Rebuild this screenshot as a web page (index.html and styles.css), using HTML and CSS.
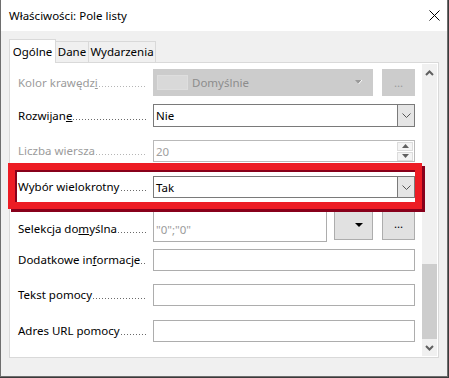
FILE: index.html
```html
<!DOCTYPE html>
<html lang="pl">
<head>
  <meta charset="UTF-8" />
  <title>Właściwości: Pole listy</title>
  <link rel="stylesheet" href="styles.css">
</head>
<body>
  <div class="window">
    <div class="titlebar">
      <span class="title">Właściwości: Pole listy</span>
      <svg class="close" width="11" height="11" viewBox="0 0 11 11">
        <path d="M0.5 0.5 L10.5 10.5 M10.5 0.5 L0.5 10.5" stroke="#000" stroke-width="1" fill="none"/>
      </svg>
    </div>

    <div class="client">
      <div class="tabs">
        <div class="tab tab-active">Ogólne</div>
        <div class="tab tab-dane">Dane</div>
        <div class="tab tab-events">Wydarzenia</div>
      </div>

      <div class="panel">
        <div class="form">
          <!-- Kolor krawedzi (disabled) -->
          <div class="row row-1">
            <div class="label disabled"><span>Kolor krawędz<u>i</u></span><span class="leader"></span></div>
            <div class="listbox listbox-disabled">
              <span class="swatch"></span>
              <span class="value">Domyślnie</span>
              <svg class="tri-disabled" width="8" height="5" viewBox="0 0 8 5">
                <path d="M0 0 H7 L3.5 4 Z" fill="#9a9a9a"/>
                <path d="M7 0 L3.5 4" stroke="#fff" stroke-width="1"/>
              </svg>
            </div>
            <div class="btn btn-disabled">...</div>
          </div>

          <div class="row row-2">
            <div class="label"><span>Rozwijan<u>e</u></span><span class="leader"></span></div>
            <div class="listbox">
              <span class="value">Nie</span>
              <span class="drop">
                <svg width="9" height="5" viewBox="0 0 9 5"><path d="M0.5 0.5 L4.5 4.5 L8.5 0.5" stroke="#555" fill="none"/></svg>
              </span>
            </div>
          </div>

          <div class="row row-3">
            <div class="label disabled"><span>Liczba wiersza</span><span class="leader"></span></div>
            <div class="spin">
              <span class="value">20</span>
              <span class="spin-btns">
                <span class="spin-btn"><svg width="7" height="4" viewBox="0 0 7 4"><path d="M0 4 H7 L3.5 0 Z" fill="#606060"/></svg></span>
                <span class="spin-btn"><svg width="7" height="4" viewBox="0 0 7 4"><path d="M0 0 H7 L3.5 4 Z" fill="#606060"/></svg></span>
              </span>
            </div>
          </div>

          <div class="row row-4">
            <div class="label"><span>Wybór wielokrotny</span><span class="leader"></span></div>
            <div class="listbox">
              <span class="value">Tak</span>
              <span class="drop">
                <svg width="9" height="5" viewBox="0 0 9 5"><path d="M0.5 0.5 L4.5 4.5 L8.5 0.5" stroke="#555" fill="none"/></svg>
              </span>
            </div>
          </div>

          <div class="row row-5">
            <div class="label"><span>Selekcja do<u>m</u>yślna</span><span class="leader"></span></div>
            <div class="textarea"><span class="placeholder">"0";"0"</span></div>
            <div class="btn btn-drop">
              <svg width="8" height="4" viewBox="0 0 8 4"><path d="M0 0 H8 L4 4 Z" fill="#000"/></svg>
            </div>
            <div class="btn btn-more">...</div>
          </div>

          <div class="row row-6">
            <div class="label"><span>Dodatkowe in<u>f</u>ormacje</span><span class="leader"></span></div>
            <div class="field"></div>
          </div>

          <div class="row row-7">
            <div class="label"><span>Tekst pomocy</span><span class="leader"></span></div>
            <div class="field"></div>
          </div>

          <div class="row row-8">
            <div class="label"><span>Adres URL pomocy</span><span class="leader"></span></div>
            <div class="field"></div>
          </div>
        </div>

        <div class="scrollbar">
          <div class="sb-btn">
            <svg width="9" height="6" viewBox="0 0 9 6"><path d="M1 5 L4.5 1.5 L8 5" stroke="#606060" stroke-width="2" fill="none"/></svg>
          </div>
          <div class="sb-track"><div class="sb-thumb"></div></div>
          <div class="sb-btn">
            <svg width="9" height="6" viewBox="0 0 9 6"><path d="M1 1 L4.5 4.5 L8 1" stroke="#606060" stroke-width="2" fill="none"/></svg>
          </div>
        </div>

        <div class="highlight"></div>
      </div>
    </div>
  </div>
</body>
</html>
```

FILE: styles.css
```css
body {
  margin: 0;
  background: #3b3b3b;
  font-family: 'Noto Sans', 'Open Sans', sans-serif;
  font-size: 11.5px;
  color: #000;
}

.window {
  width: 448px;
  height: 377px;
  box-sizing: border-box;
  border: 1px solid #6e6e6e;
  border-top: none;
  background: #f0f0f0;
}

.titlebar {
  height: 31px;
  background: #fff;
  display: flex;
  align-items: center;
  padding-left: 8px;
}

.title {
  font-size: 11.5px;
}

.close {
  margin-left: auto;
  margin-right: 7px;
}

.client {
  padding: 8px 8px 0 8px;
}

/* tabs */
.tabs {
  display: flex;
  align-items: flex-end;
  height: 23px;
}

.tab {
  box-sizing: border-box;
  height: 21px;
  border: 1px solid #d9d9d9;
  border-bottom: none;
  background: #f0f0f0;
  text-align: center;
  line-height: 20px;
  margin-left: -1px;
}

.tab-active {
  width: 47px;
  height: 24px;
  margin-left: 0;
  margin-bottom: -1px;
  background: #fff;
  line-height: 24px;
  position: relative;
  z-index: 1;
}

.tab-dane {
  width: 34px;
}

.tab-events {
  width: 68px;
}

/* panel */
.panel {
  position: relative;
  display: flex;
  height: 296px;
  box-sizing: border-box;
  border: 1px solid #d9d9d9;
  background: #fff;
}

.form {
  flex: 1;
  padding-left: 8px;
}

.row {
  display: flex;
  align-items: center;
  height: 22px;
}

.row-1 { margin-top: 6px; height: 27px; }
.row-2 { margin-top: 8px; height: 23px; }
.row-3 { margin-top: 13px; }
.row-4 { margin-top: 14px; }
.row-5 { margin-top: 5px; height: 39px; align-items: flex-start; }
.row-6 { margin-top: 7px; }
.row-7 { margin-top: 13px; }
.row-8 { margin-top: 14px; }

.label {
  width: 128px;
  height: 16px;
  line-height: 16px;
  margin-right: 7px;
  display: flex;
  white-space: nowrap;
}

/* dotted leader after the caption */
.leader {
  flex: 1;
  align-self: flex-end;
  height: 1px;
  margin: 0 0 4px 1px;
  background: repeating-linear-gradient(to right, #6a6a6a 0 1px, transparent 1px 3px);
}

.disabled .leader {
  background: repeating-linear-gradient(to right, #b5b5b5 0 1px, transparent 1px 3px);
}

.row-5 .label {
  align-self: flex-end;
  margin-bottom: 5px;
}

.disabled {
  color: #9b9b9b;
}

.value {
  padding-left: 2px;
  flex: 1;
}

.listbox {
  width: 262px;
  height: 23px;
  box-sizing: border-box;
  border: 1px solid #7a7a7a;
  display: flex;
  align-items: center;
}

.row-4 .listbox {
  height: 22px;
}

.drop {
  width: 17px;
  height: 100%;
  box-sizing: border-box;
  border-left: 1px solid #7a7a7a;
  background: #e5e5e5;
  display: flex;
  align-items: center;
  justify-content: center;
}

.listbox-disabled {
  width: 220px;
  height: 27px;
  border: none;
  background: #cccccc;
  color: #8c8c8c;
}

.swatch {
  width: 29px;
  height: 13px;
  margin-left: 4px;
  border: 1px solid #dedede;
  background: #d9d9d9;
}

.listbox-disabled .value {
  padding-left: 4px;
}

.tri-disabled {
  margin-right: 10px;
}

.btn {
  box-sizing: border-box;
  display: flex;
  align-items: center;
  justify-content: center;
}

.btn-disabled {
  width: 33px;
  height: 27px;
  margin-left: 9px;
  background: #cccccc;
  color: #9b9b9b;
}

.spin {
  width: 262px;
  height: 22px;
  box-sizing: border-box;
  border: 1px solid #b9b9b9;
  display: flex;
  align-items: center;
  color: #a0a0a0;
}

.spin-btns {
  display: flex;
  flex-direction: column;
  gap: 1px;
  margin-right: 1px;
}

.spin-btn {
  width: 16px;
  height: 9px;
  box-sizing: border-box;
  border: 1px solid #dcdcdc;
  background: #f4f4f4;
  display: flex;
  align-items: center;
  justify-content: center;
}

.textarea {
  width: 174px;
  height: 39px;
  box-sizing: border-box;
  border: 1px solid #adadad;
  display: flex;
  align-items: flex-end;
  padding: 0 0 4px 2px;
  color: #9b9b9b;
}

.btn-drop {
  width: 39px;
  height: 37px;
  margin-left: 7px;
  border: 1px solid #adadad;
  background: #e1e1e1;
  justify-content: flex-end;
  padding: 6px 9px 0 0;
}

.btn-more {
  width: 33px;
  height: 37px;
  margin-left: 9px;
  border: 1px solid #adadad;
  background: #e1e1e1;
  padding-top: 4px;
}

.field {
  width: 262px;
  height: 22px;
  box-sizing: border-box;
  border: 1px solid #adadad;
}

/* scrollbar */
.scrollbar {
  width: 15px;
  margin: 1px 1px 1px 0;
  background: #f0f0f0;
  display: flex;
  flex-direction: column;
}

.sb-btn {
  height: 17px;
  display: flex;
  align-items: center;
  justify-content: center;
}

.sb-track {
  flex: 1;
  display: flex;
  flex-direction: column;
  justify-content: flex-end;
}

.sb-thumb {
  height: 75px;
  background: #cdcdcd;
}

/* red annotation frame */
.highlight {
  position: absolute;
  left: -2px;
  top: 100px;
  width: 414px;
  height: 46px;
  box-sizing: border-box;
  border: 7px solid #ed1c24;
  box-shadow: 3px 3px 0 #88001b, inset 2px 2px 0 #88001b;
}
```
